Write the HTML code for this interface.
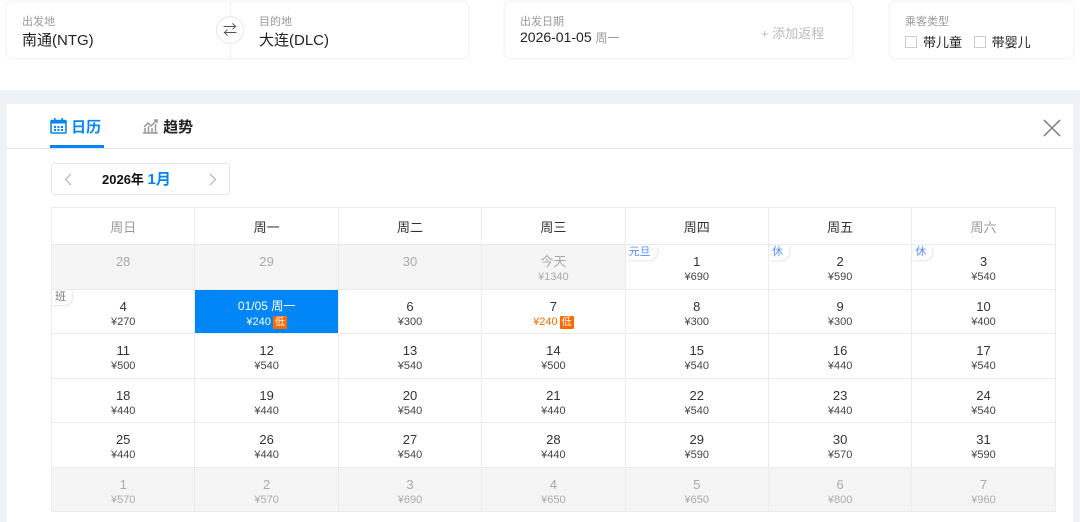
<!DOCTYPE html>
<html><head><meta charset="utf-8"><style>
*{margin:0;padding:0;box-sizing:border-box}
body{width:1080px;height:522px;overflow:hidden;background:#fff;font-family:"Liberation Sans","Noto Sans CJK SC",sans-serif;position:relative;color:#333}
.card{position:absolute;top:2px;height:56px;background:#fff;border-radius:5px;box-shadow:0 0 3px rgba(0,0,0,.12)}
.lbl{position:absolute;font-size:11px;color:#999}
.val{position:absolute;font-size:15px;color:#222}
.band{position:absolute;left:0;top:90px;width:1080px;height:432px;background:#eef1f5}
.panel{position:absolute;left:7px;top:104px;width:1066px;height:418px;background:#fff}
table{position:absolute;left:51px;top:207px;border-collapse:collapse;table-layout:fixed}
td{border:1px solid #ebebeb;width:143.4px;text-align:center;font-size:13px;position:relative;vertical-align:top}
tr.h td{height:37px;vertical-align:middle;color:#333}
tr.d td{height:44.5px;padding-top:8px;line-height:17px}
td small{display:block;font-size:11px;line-height:14px;color:#444}
td.g{background:#f5f5f5;color:#aaa}td.g small{color:#aaa}
td.sel{background:#0086f6;color:#fff}td.sel small{color:#fff}
.low{display:inline-block;background:#ff6a00;color:#fff;font-size:10px;line-height:13px;padding:0 2px;margin-left:2px;border-radius:1px}
.tag{position:absolute;left:0;top:0;font-size:11px;line-height:15px;padding:0 6px 0 3px;background:#fff;border-radius:0 0 8px 0;box-shadow:1px 1px 2px rgba(0,0,0,.1);color:#5a8df5}
</style></head><body>
<div class="card" style="left:7px;width:461px">
<div class="lbl" style="left:15px;top:11px">出发地</div>
<div class="val" style="left:15px;top:27px">南通(NTG)</div>
<div style="position:absolute;left:223px;top:0;width:1px;height:56px;background:#eee"></div>
<div style="position:absolute;left:209px;top:14px;width:28px;height:28px;border-radius:50%;background:#fff;border:1px solid #e5e5e5;text-align:center;line-height:26px;font-size:14px;color:#555">⇄</div>
<div class="lbl" style="left:252px;top:11px">目的地</div>
<div class="val" style="left:252px;top:27px">大连(DLC)</div>
</div>
<div class="card" style="left:505px;width:347px">
<div class="lbl" style="left:15px;top:11px">出发日期</div>
<div class="val" style="left:15px;top:27px;font-size:14px">2026-01-05 <span style="font-size:12px;color:#999">周一</span></div>
<div style="position:absolute;left:256px;top:21px;font-size:13px;color:#bbb">+ 添加返程</div>
</div>
<div class="card" style="left:890px;width:183px">
<div class="lbl" style="left:15px;top:11px">乘客类型</div>
<div style="position:absolute;left:15px;top:30px;font-size:13px;color:#222">
<span style="display:inline-block;width:12px;height:12px;border:1px solid #ccc;vertical-align:-1px;margin-right:6px"></span>带儿童
<span style="display:inline-block;width:12px;height:12px;border:1px solid #ccc;vertical-align:-1px;margin:0 6px 0 8px"></span>带婴儿</div>
</div>
<div class="band"></div>
<div class="panel">
<div style="position:absolute;left:43px;top:12px;font-size:15px;color:#0086f6;font-weight:bold">
<svg width="17" height="16" viewBox="0 0 17 16" style="vertical-align:-2px"><rect x="1" y="2.5" width="15" height="12.5" rx="1" fill="none" stroke="#0086f6" stroke-width="1.6"/><rect x="1" y="2.5" width="15" height="3" fill="#0086f6"/><rect x="4" y="0" width="1.6" height="4" fill="#0086f6"/><rect x="11.4" y="0" width="1.6" height="4" fill="#0086f6"/><g fill="#0086f6"><rect x="4" y="8" width="2" height="2"/><rect x="7.5" y="8" width="2" height="2"/><rect x="11" y="8" width="2" height="2"/><rect x="4" y="11" width="2" height="2"/><rect x="7.5" y="11" width="2" height="2"/><rect x="11" y="11" width="2" height="2"/></g></svg> 日历</div>
<div style="position:absolute;left:43px;top:41px;width:54px;height:3px;background:#0086f6"></div>
<div style="position:absolute;left:135px;top:12px;font-size:15px;color:#222;font-weight:bold">
<svg width="17" height="16" viewBox="0 0 17 16" style="vertical-align:-2px"><path d="M1 15h15M3 15V10M6.5 15V8M10 15V10M13.5 15V6M2 9l4-4 3 3 6-6M12 2h3v3" fill="none" stroke="#999" stroke-width="1.5"/></svg> 趋势</div>
<div style="position:absolute;left:0;top:44px;width:1066px;height:1px;background:#e5e5e5"></div>
<svg style="position:absolute;left:1036px;top:15px" width="18" height="18" viewBox="0 0 18 18"><path d="M1 1L17 17M17 1L1 17" stroke="#888" stroke-width="1.6"/></svg>
<div style="position:absolute;left:44px;top:59px;width:179px;height:32px;border:1px solid #e5e5e5;border-radius:3px">
<svg style="position:absolute;left:12px;top:9px" width="8" height="13" viewBox="0 0 8 13"><path d="M7 1L1.5 6.5L7 12" fill="none" stroke="#bbb" stroke-width="1.3"/></svg>
<span style="position:absolute;left:50px;top:7px;font-size:13px;font-weight:bold;color:#111;line-height:17px">2026年 <span style="color:#0086f6;font-size:15px">1月</span></span>
<svg style="position:absolute;left:157px;top:9px" width="8" height="13" viewBox="0 0 8 13"><path d="M1 1L6.5 6.5L1 12" fill="none" stroke="#bbb" stroke-width="1.3"/></svg>
</div>
</div>
<table>
<tr class="h"><td style="color:#999">周日</td><td>周一</td><td>周二</td><td>周三</td><td>周四</td><td>周五</td><td style="color:#999">周六</td></tr>
<tr class="d"><td class="g">28</td><td class="g">29</td><td class="g">30</td><td class="g">今天<small>¥1340</small></td><td><span class="tag">元旦</span>1<small>¥690</small></td><td><span class="tag">休</span>2<small>¥590</small></td><td><span class="tag">休</span>3<small>¥540</small></td></tr>
<tr class="d"><td><span class="tag" style="color:#777">班</span>4<small>¥270</small></td><td class="sel" style="font-size:12px">01/05 周一<small>¥240<span class="low">低</span></small></td><td>6<small>¥300</small></td><td>7<small style="color:#ff6a00">¥240<span class="low">低</span></small></td><td>8<small>¥300</small></td><td>9<small>¥300</small></td><td>10<small>¥400</small></td></tr>
<tr class="d"><td>11<small>¥500</small></td><td>12<small>¥540</small></td><td>13<small>¥540</small></td><td>14<small>¥500</small></td><td>15<small>¥540</small></td><td>16<small>¥440</small></td><td>17<small>¥540</small></td></tr>
<tr class="d"><td>18<small>¥440</small></td><td>19<small>¥440</small></td><td>20<small>¥540</small></td><td>21<small>¥440</small></td><td>22<small>¥540</small></td><td>23<small>¥440</small></td><td>24<small>¥540</small></td></tr>
<tr class="d"><td>25<small>¥440</small></td><td>26<small>¥440</small></td><td>27<small>¥540</small></td><td>28<small>¥440</small></td><td>29<small>¥590</small></td><td>30<small>¥570</small></td><td>31<small>¥590</small></td></tr>
<tr class="d"><td class="g">1<small>¥570</small></td><td class="g">2<small>¥570</small></td><td class="g">3<small>¥690</small></td><td class="g">4<small>¥650</small></td><td class="g">5<small>¥650</small></td><td class="g">6<small>¥800</small></td><td class="g">7<small>¥960</small></td></tr>
</table>
</body></html>
